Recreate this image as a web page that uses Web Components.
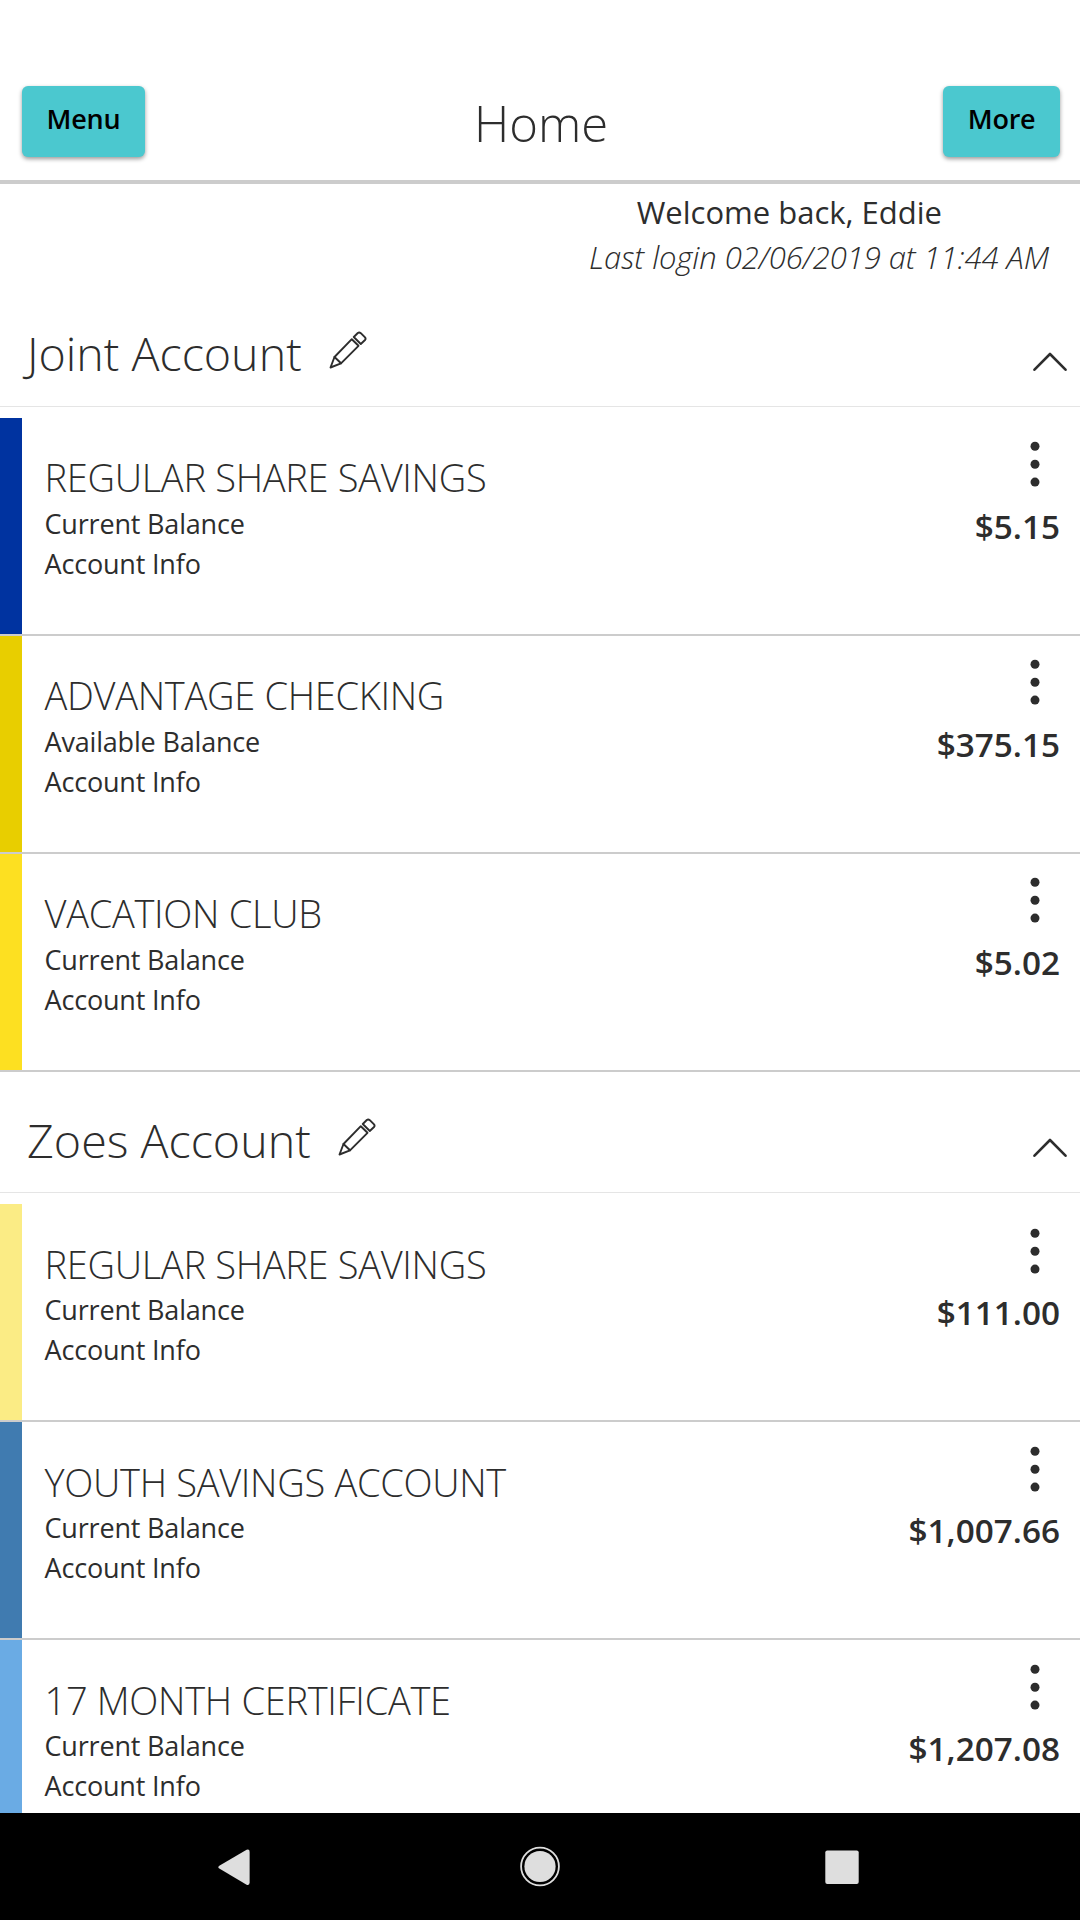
<!DOCTYPE html>
<html lang="en">
<head>
<meta charset="utf-8">
<title>Home</title>
<style>
    body {
        margin: 0;
        background: #fff;
    }
</style>
</head>
<body>
<bank-app>
    <bank-header slot="header" heading="Home">
        <bank-button slot="start">Menu</bank-button>
        <bank-button slot="end">More</bank-button>
    </bank-header>
    <bank-welcome>
        <span slot="greeting">Welcome back, Eddie</span>
        <span slot="login">Last login 02/06/2019 at 11:44 AM</span>
    </bank-welcome>
    <account-group>
        <span slot="name">Joint Account</span>
        <account-row color="#0033a0" balance="Current Balance" amount="$5.15">REGULAR SHARE SAVINGS</account-row>
        <account-row color="#e8ce00" balance="Available Balance" amount="$375.15">ADVANTAGE CHECKING</account-row>
        <account-row color="#fde021" balance="Current Balance" amount="$5.02">VACATION CLUB</account-row>
    </account-group>
    <account-group>
        <span slot="name">Zoes Account</span>
        <account-row color="#fbec85" balance="Current Balance" amount="$111.00">REGULAR SHARE SAVINGS</account-row>
        <account-row color="#407bb0" balance="Current Balance" amount="$1,007.66">YOUTH SAVINGS ACCOUNT</account-row>
        <account-row color="#6aabe4" balance="Current Balance" amount="$1,207.08">17 MONTH CERTIFICATE</account-row>
    </account-group>
    <system-nav slot="nav"></system-nav>
</bank-app>
<script>
class BankApp extends HTMLElement {
    constructor() {
        super();
        this._root = this.attachShadow({mode:"open"});
        this._root.innerHTML = `
            <style>
                :host {
                    display: flex;
                    flex-direction: column;
                    width: 1080px;
                    height: 1920px;
                    overflow: hidden;
                    color: #2d2d2d;
                    background: #fff;
                    font-family: "Open Sans", sans-serif;
                }
                main {
                    flex: 1;
                    min-height: 0;
                    overflow: hidden;
                }
            </style>
            <slot name="header"></slot>
            <main><slot></slot></main>
            <slot name="nav"></slot>
        `;
    }
}
window.customElements.define("bank-app", BankApp);

class BankHeader extends HTMLElement {
    constructor() {
        super();
        this._root = this.attachShadow({mode:"open"});
    }
    connectedCallback() {
        this._root.innerHTML = `
            <style>
                :host {
                    display: grid;
                    grid-template-columns: 1fr auto 1fr;
                    box-sizing: border-box;
                    height: 184px;
                    padding: 86px 20px 0 22px;
                    border-bottom: 4px solid #ccc;
                }
                h1 {
                    margin: 0;
                    font-size: 49px;
                    font-weight: 300;
                    line-height: 74px;
                }
                .end {
                    display: flex;
                    justify-content: flex-end;
                }
            </style>
            <div><slot name="start"></slot></div>
            <h1>${this.getAttribute("heading")}</h1>
            <div class="end"><slot name="end"></slot></div>
        `;
    }
}
window.customElements.define("bank-header", BankHeader);

class BankButton extends HTMLElement {
    constructor() {
        super();
        this._root = this.attachShadow({mode:"open"});
        this._root.innerHTML = `
            <style>
                :host {
                    display: inline-block;
                    vertical-align: top;
                }
                button {
                    display: block;
                    height: 71px;
                    padding: 0 24.6px 5px;
                    border: 0;
                    border-radius: 6px;
                    background: #4bc8cf;
                    box-shadow: 0 2px 4px rgba(0, 0, 0, .4);
                    color: #000;
                    font: 600 27px/66px "Open Sans", sans-serif;
                    letter-spacing: -.25px;
                }
            </style>
            <button><slot></slot></button>
        `;
    }
}
window.customElements.define("bank-button", BankButton);

class BankWelcome extends HTMLElement {
    constructor() {
        super();
        this._root = this.attachShadow({mode:"open"});
        this._root.innerHTML = `
            <style>
                :host {
                    display: flex;
                    flex-direction: column;
                    align-items: flex-end;
                    height: 101px;
                    font-size: 31px;
                    line-height: 45px;
                }
                .greeting {
                    padding: 5.5px 138px 0 0;
                }
                .login {
                    padding-right: 31px;
                    font-style: italic;
                    font-weight: 300;
                    letter-spacing: -.06px;
                }
            </style>
            <div class="greeting"><slot name="greeting"></slot></div>
            <div class="login"><slot name="login"></slot></div>
        `;
    }
}
window.customElements.define("bank-welcome", BankWelcome);

class AccountGroup extends HTMLElement {
    constructor() {
        super();
        this._root = this.attachShadow({mode:"open"});
        this._root.innerHTML = `
            <style>
                :host {
                    display: block;
                }
                header {
                    display: flex;
                    box-sizing: border-box;
                    height: 121.6px;
                    margin-bottom: 11px;
                    padding: 0 13px 0 27px;
                    border-bottom: 1px solid #e5e5e5;
                }
                h2 {
                    margin: 0;
                    padding-top: 34px;
                    font-size: 46.6px;
                    font-weight: 300;
                    line-height: 68px;
                }
                .pencil {
                    margin: 46px auto 0 27.4px;
                }
                .chevron {
                    margin-top: 65.8px;
                }
                svg {
                    display: block;
                    fill: none;
                    stroke: #2d2d2d;
                    stroke-linecap: round;
                    stroke-linejoin: round;
                }
            </style>
            <header>
                <h2><slot name="name"></slot></h2>
                <svg class="pencil" width="38" height="38" viewBox="0 0 38 38" stroke-width="1.9">
                    <path d="M1.5 36.5 5.5 26 22.8 8.2 29.5 14.8 12 32.3Z"/>
                    <path d="M5.5 26 12 32.3M24.8 6 28.8 2Q30.2.8 31.8 2.2L35.8 6.2Q37.2 7.7 36 9L31.8 13Z"/>
                </svg>
                <svg class="chevron" width="34" height="21" viewBox="0 0 34 21" stroke-width="2.6">
                    <path d="M1.5 18.7 17 3 32.5 18.7"/>
                </svg>
            </header>
            <slot></slot>
        `;
    }
}
window.customElements.define("account-group", AccountGroup);

class AccountRow extends HTMLElement {
    constructor() {
        super();
        this._root = this.attachShadow({mode:"open"});
    }
    connectedCallback() {
        this._root.innerHTML = `
            <style>
                :host {
                    display: flex;
                    box-sizing: border-box;
                    height: 218px;
                    border-bottom: 2px solid #ccc;
                }
                .bar {
                    width: 22px;
                    background: ${this.getAttribute("color")};
                }
                .info {
                    flex: 1;
                    padding: 34.6px 0 0 22.5px;
                    font-size: 27px;
                    line-height: 40px;
                    letter-spacing: -.18px;
                }
                h3 {
                    margin: 0 0 .2px;
                    font-size: 38px;
                    font-weight: 300;
                    line-height: 51.2px;
                    letter-spacing: -.3px;
                }
                .side {
                    display: flex;
                    flex-direction: column;
                    align-items: flex-end;
                    padding: 23.6px 20px 0 0;
                }
                svg {
                    display: block;
                    margin-right: 20px;
                    fill: #2d2d2d;
                }
                .amount {
                    padding-top: 16.4px;
                    font-size: 33.3px;
                    font-weight: 600;
                    line-height: 44px;
                }
            </style>
            <div class="bar"></div>
            <div class="info">
                <h3><slot></slot></h3>
                <div>${this.getAttribute("balance")}</div>
                <div>Account Info</div>
            </div>
            <div class="side">
                <svg width="10" height="46" viewBox="0 0 10 46">
                    <circle cx="5" cy="5.3" r="4.5"/>
                    <circle cx="5" cy="23.2" r="4.5"/>
                    <circle cx="5" cy="41.1" r="4.5"/>
                </svg>
                <div class="amount">${this.getAttribute("amount")}</div>
            </div>
        `;
    }
}
window.customElements.define("account-row", AccountRow);

class SystemNav extends HTMLElement {
    constructor() {
        super();
        this._root = this.attachShadow({mode:"open"});
        this._root.innerHTML = `
            <style>
                :host {
                    display: flex;
                    align-items: center;
                    justify-content: center;
                    gap: 262px;
                    height: 107px;
                    background: #000;
                }
                svg {
                    display: block;
                    fill: #dedede;
                }
            </style>
            <svg width="40" height="42" viewBox="0 0 40 42">
                <path d="M1.3 19.8 28.6 3.7Q31.6 2.6 31.6 5.8V36.6Q31.6 39.8 28.6 38.7L1.3 22.6Q-.7 21.2 1.3 19.8Z"/>
            </svg>
            <svg width="40" height="42" viewBox="0 0 40 42">
                <circle cx="20" cy="20.5" r="15.6"/>
                <circle cx="20" cy="20.5" r="18.9" fill="none" stroke="#dedede" stroke-width="1.8"/>
            </svg>
            <svg width="40" height="42" viewBox="0 0 40 42">
                <rect x="3.3" y="4.5" width="33.4" height="33.4" rx="2"/>
            </svg>
        `;
    }
}
window.customElements.define("system-nav", SystemNav);
</script>
</body>
</html>
